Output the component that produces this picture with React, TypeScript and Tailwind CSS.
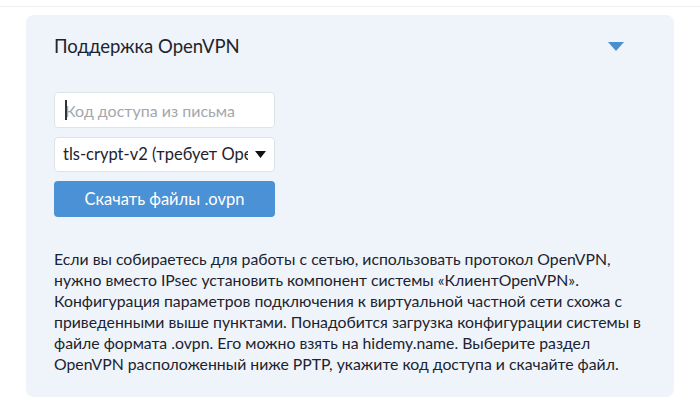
import { useState } from 'react';

const FONT = { fontFamily: 'Lato, "Noto Sans", sans-serif' };

export default function App() {
  const [code, setCode] = useState('');

  return (
    <div className="h-[420px] w-[700px] overflow-hidden bg-white text-[#1d232e]" style={FONT}>
      <div className="h-[7px] border-b border-[#eceef1]" />

      <section className="mx-[26px] mt-[8px] h-[382px] rounded-[8px] bg-[#eef4fa] px-[28px] pt-[17px]">
        {/* header */}
        <div className="flex items-center justify-between pr-[22px]">
          <h2 className="text-[18.5px] leading-[28px]">Поддержка OpenVPN</h2>
          <svg width="16" height="9" viewBox="0 0 16 9" className="mt-[1px]">
            <path d="M0 0h16L8 9z" fill="#4a8fd0" />
          </svg>
        </div>

        {/* form */}
        <div className="mt-[32px] flex w-[221px] flex-col">
          <div className="relative">
            <input
              value={code}
              onChange={(e) => setCode(e.target.value)}
              placeholder="Код доступа из письма"
              className="h-[36px] w-full rounded-[4px] border border-[#dde3ea] bg-white px-[10px] text-[16px] text-[#1d232e] placeholder:text-[#a3a7ad] focus:outline-none"
            />
            <span className="absolute left-[11px] top-[8px] h-[20px] w-[2px] bg-[#333]" />
          </div>

          <div className="mt-[9px] flex h-[35px] items-center rounded-[4px] border border-[#dde3ea] bg-white pl-[8px] pr-[8px]">
            <span className="flex-1 overflow-hidden whitespace-nowrap text-[16.5px]">tls-crypt-v2 (требует OpenVPN 2.5+)</span>
            <svg width="11" height="7" viewBox="0 0 11 7" className="ml-[7px] shrink-0">
              <path d="M0 0h11L5.5 7z" fill="#111" />
            </svg>
          </div>

          <button className="mt-[9px] h-[36px] rounded-[4px] bg-[#4b91d5] text-[16.5px] text-white">
            Скачать файлы .ovpn
          </button>
        </div>

        {/* description */}
        <p className="mt-[31px] whitespace-nowrap text-[15.8px] leading-[21px] text-[#1d232e]">
          Если вы собираетесь для работы с сетью, использовать протокол OpenVPN,
          <br />
          нужно вместо IPsec установить компонент системы «КлиентOpenVPN».
          <br />
          Конфигурация параметров подключения к виртуальной частной сети схожа с
          <br />
          приведенными выше пунктами. Понадобится загрузка конфигурации системы в
          <br />
          файле формата .ovpn. Его можно взять на hidemy.name. Выберите раздел
          <br />
          OpenVPN расположенный ниже PPTP, укажите код доступа и скачайте файл.
        </p>
      </section>
    </div>
  );
}
